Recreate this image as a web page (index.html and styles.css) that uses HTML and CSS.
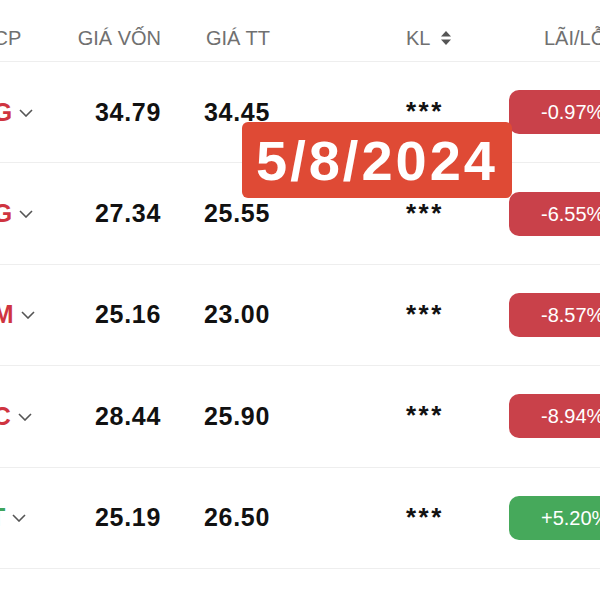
FILE: index.html
```html
<!DOCTYPE html>
<html lang="vi">
<head>
<meta charset="utf-8">
<link rel="stylesheet" href="styles.css">
</head>
<body>
<div class="page">
  <div class="table">
    <div class="row head">
      <div class="c1">MÃ CP</div>
      <div class="c2">GIÁ VỐN</div>
      <div class="c3">GIÁ TT</div>
      <div class="c4">KL <svg class="sort" width="12" height="16" viewBox="0 0 12 16"><path d="M6 1 L11 6.5 H1 Z" fill="#555"/><path d="M6 15 L11 9.5 H1 Z" fill="#555"/></svg></div>
      <div class="c5">LÃI/LỖ</div>
    </div>
    <div class="row">
      <div class="c1 tick red">HPG <svg class="chev" width="14" height="8" viewBox="0 0 14 8"><path d="M1 1 L7 7 L13 1" fill="none" stroke="#555" stroke-width="1.6"/></svg></div>
      <div class="c2 num">34.79</div>
      <div class="c3 num">34.45</div>
      <div class="c4 stars">***</div>
      <div class="c5"><span class="pill neg">-0.97%</span></div>
    </div>
    <div class="row">
      <div class="c1 tick red">DXG <svg class="chev" width="14" height="8" viewBox="0 0 14 8"><path d="M1 1 L7 7 L13 1" fill="none" stroke="#555" stroke-width="1.6"/></svg></div>
      <div class="c2 num">27.34</div>
      <div class="c3 num">25.55</div>
      <div class="c4 stars">***</div>
      <div class="c5"><span class="pill neg">-6.55%</span></div>
    </div>
    <div class="row">
      <div class="c1 tick red">VHM <svg class="chev" width="14" height="8" viewBox="0 0 14 8"><path d="M1 1 L7 7 L13 1" fill="none" stroke="#555" stroke-width="1.6"/></svg></div>
      <div class="c2 num">25.16</div>
      <div class="c3 num">23.00</div>
      <div class="c4 stars">***</div>
      <div class="c5"><span class="pill neg">-8.57%</span></div>
    </div>
    <div class="row">
      <div class="c1 tick red">DPC <svg class="chev" width="14" height="8" viewBox="0 0 14 8"><path d="M1 1 L7 7 L13 1" fill="none" stroke="#555" stroke-width="1.6"/></svg></div>
      <div class="c2 num">28.44</div>
      <div class="c3 num">25.90</div>
      <div class="c4 stars">***</div>
      <div class="c5"><span class="pill neg">-8.94%</span></div>
    </div>
    <div class="row">
      <div class="c1 tick green">FPT <svg class="chev" width="14" height="8" viewBox="0 0 14 8"><path d="M1 1 L7 7 L13 1" fill="none" stroke="#555" stroke-width="1.6"/></svg></div>
      <div class="c2 num">25.19</div>
      <div class="c3 num">26.50</div>
      <div class="c4 stars">***</div>
      <div class="c5"><span class="pill pos">+5.20%</span></div>
    </div>
  </div>
  <div class="date">5/8/2024</div>
</div>
</body>
</html>
```
FILE: styles.css
```css
html, body {
  margin: 0;
  padding: 0;
  background: #fff;
}
body {
  width: 600px;
  height: 600px;
  overflow: hidden;
  font-family: "Liberation Sans", Arial, sans-serif;
}
.page {
  position: relative;
  width: 600px;
  height: 600px;
  overflow: hidden;
}
.table {
  margin-left: -42px;
  width: 720px;
}
.row {
  display: grid;
  grid-template-columns: 110px 93px 109px 239px 169px;
  align-items: center;
  height: 101.4px;
  border-bottom: 1.5px solid #eeeeee;
  box-sizing: border-box;
}
.row.head {
  height: 62px;
  padding-top: 15px;
  font-size: 20px;
  color: #707070;
}
.c2, .c3 {
  text-align: right;
}
.c4 {
  padding-left: 136px;
  display: flex;
  align-items: center;
}
.head .c5 {
  padding-left: 35px;
}
.sort {
  margin-left: 10px;
}
.tick {
  font-size: 25px;
  font-weight: 700;
  display: flex;
  align-items: center;
  gap: 7px;
}
.chev {
  margin-top: 1px;
}
.red { color: #cf3440; }
.green { color: #3ea55c; }
.num {
  font-size: 25px;
  font-weight: 700;
  letter-spacing: 0.7px;
  color: #111;
}
.stars {
  font-size: 26px;
  font-weight: 700;
  letter-spacing: 2.5px;
  color: #111;
  margin-top: -1px;
}
.pill {
  display: block;
  height: 44px;
  line-height: 44px;
  border-radius: 10px;
  padding-left: 32px;
  font-size: 20px;
  color: #fff;
}
.pill.neg { background: #c9414a; }
.pill.pos { background: #46a95b; }
.date {
  position: absolute;
  left: 242px;
  top: 122px;
  width: 270px;
  height: 76px;
  background: #df4a35;
  border-radius: 6px;
  color: #fff;
  font-size: 56px;
  font-weight: 700;
  letter-spacing: 3px;
  display: flex;
  align-items: center;
  justify-content: center;
}
```
